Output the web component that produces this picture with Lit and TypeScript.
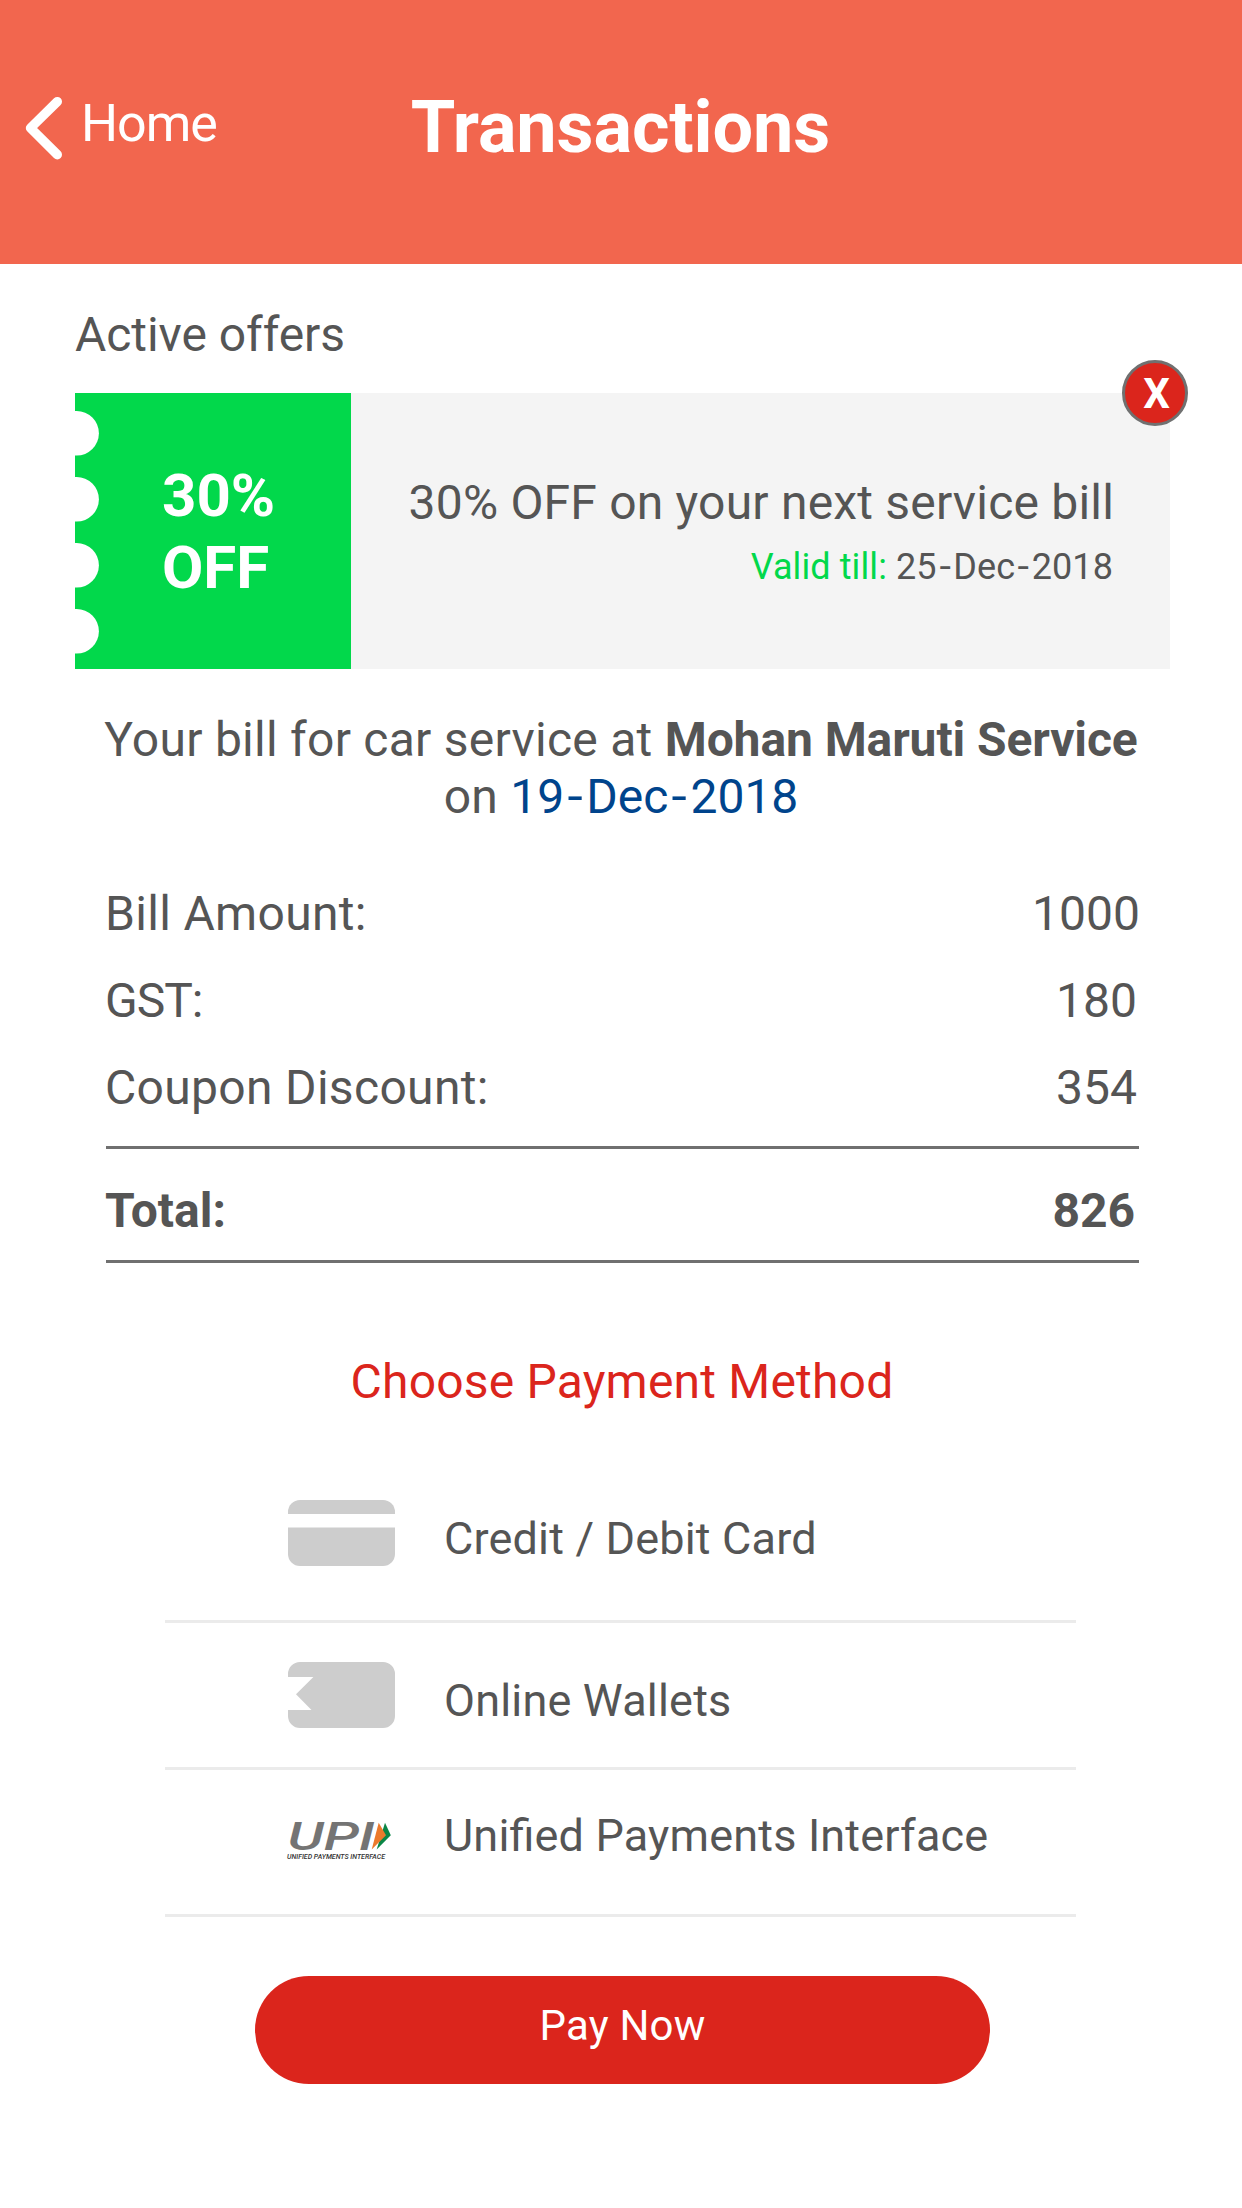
import { LitElement, html, css, svg, TemplateResult } from "lit";
import { customElement, property } from "lit/decorators.js";

const hyphenated = (date: string): TemplateResult =>
  html`${date.split("-").map((part, i) => (i ? html`<span class="dash">-</span>${part}` : part))}`;

const chevron = html`<svg class="chevron" width="42" height="66" viewBox="0 0 42 66">
  <polyline points="37.3,6.6 10.5,33 37.3,59.7" fill="none" stroke="#fff" stroke-width="9.4"
    stroke-linecap="round" stroke-linejoin="round" />
</svg>`;

const cardIcon = html`<svg width="107" height="66" viewBox="0 0 107 66" fill="#cdcdcd">
  <path d="M0 14V12A12 12 0 0 1 12 0H95A12 12 0 0 1 107 12V14Z" />
  <path d="M0 27.4H107V54A12 12 0 0 1 95 66H12A12 12 0 0 1 0 54Z" />
</svg>`;

const walletIcon = html`<svg width="107" height="66" viewBox="0 0 107 66" fill="#cdcdcd">
  <path d="M12 0H95A12 12 0 0 1 107 12V54A12 12 0 0 1 95 66H12A12 12 0 0 1 0 54V48H23.5L8 32.2L25.4 15H0V12A12 12 0 0 1 12 0Z" />
</svg>`;

const upiIcon = html`<svg class="upi" width="110" height="58" viewBox="0 -14 110 58">
  <path d="M100 2.7L105.8 15.3L91.7 29.5Z" fill="#0b8646" />
  <path d="M93.7 2.7L101 15.3L86.7 29.5Z" fill="#ec7a2c" />
  <text x="2.5" y="29.8" class="upi-mark" textLength="87" lengthAdjust="spacingAndGlyphs">UPI</text>
  <text x="2" y="38.7" class="upi-caption" textLength="98" lengthAdjust="spacingAndGlyphs">UNIFIED PAYMENTS INTERFACE</text>
</svg>`;

const notches = html`<svg class="notches" width="24" height="276" viewBox="0 0 24 276" fill="#fff">
  ${[40.3, 106.3, 172.3, 238.3].map((y) => svg`<circle cx="1.6" cy=${y} r="22.3" />`)}
</svg>`;

const base = css`
  :host {
    display: block;
    font-family: Roboto, "Liberation Sans", sans-serif;
    color: #555;
  }
  .dash {
    display: inline-block;
    width: 0.46em;
    text-align: center;
    letter-spacing: 0;
    transform: scaleX(1.15);
  }
`;

@customElement("top-bar")
class TopBar extends LitElement {
  static styles = [base, css`
    .bar {
      display: grid;
      grid-template-columns: 1fr auto 1fr;
      align-items: start;
      height: 264px;
      background: #f2664e;
      color: #fff;
    }
    .back { display: flex; padding: 94px 0 0 20px; }
    .chevron { margin: 1px 0 0; }
    .home { margin-left: 19px; font-size: 52px; line-height: 60px; letter-spacing: -1px; }
    .title { margin: 0; padding: 86px 1px 0 0; font-size: 72px; line-height: 84px; font-weight: 700; letter-spacing: -0.1px; }
  `];
  render() {
    return html`<header class="bar">
      <div class="back">${chevron}<span class="home">Home</span></div>
      <h1 class="title">Transactions</h1>
    </header>`;
  }
}

@customElement("offer-card")
class OfferCard extends LitElement {
  static styles = [base, css`
    .card { position: relative; display: flex; width: 1095px; height: 276px; background: #f4f4f4; }
    .ticket {
      position: relative;
      box-sizing: border-box;
      width: 276px;
      padding: 67px 0 0 87px;
      background: #02d84b;
      color: #fff;
      font-size: 60px;
      line-height: 72px;
      font-weight: 700;
    }
    .notches { position: absolute; left: 0; top: 0; }
    .info { flex: 1; padding: 82px 56px 0 0; text-align: right; }
    .headline { font-size: 48px; line-height: 56px; letter-spacing: 0.2px; }
    .valid { margin: 16px 1px 0 0; font-size: 36px; line-height: 40px; letter-spacing: 0.1px; }
    .green { color: #02d84b; letter-spacing: 0.1px; }
    .close {
      position: absolute;
      top: -33px;
      right: -18px;
      box-sizing: border-box;
      width: 66px;
      height: 66px;
      padding: 6px 0 0 3px;
      border: 3px solid #707070;
      border-radius: 50%;
      background: #db251c;
      color: #fff;
      font-size: 42px;
      line-height: 50px;
      font-weight: 700;
      text-align: center;
    }
  `];
  render() {
    return html`<div class="card">
      <div class="ticket">${notches}<div>30%</div><div>OFF</div></div>
      <div class="info">
        <div class="headline">30% OFF on your next service bill</div>
        <div class="valid"><span class="green">Valid till:</span> ${hyphenated("25-Dec-2018")}</div>
      </div>
      <div class="close">X</div>
    </div>`;
  }
}

@customElement("bill-summary")
class BillSummary extends LitElement {
  static styles = [base, css`
    .intro { margin: 0; font-size: 48px; line-height: 57px; text-align: center; letter-spacing: 0.26px; }
    .shop { font-weight: 700; letter-spacing: -0.1px; }
    .date { color: #00448c; letter-spacing: 0; }
    .rows { display: flex; flex-direction: column; gap: 31px; padding: 61px 103px 30px 106px; }
    .row { display: flex; justify-content: space-between; font-size: 48px; line-height: 56px; }
    .label { margin-left: -1px; letter-spacing: 0.32px; }
    .label.caps { letter-spacing: -1px; }
    .value { margin-right: 2px; }
    .value.wide { margin-right: -1px; }
    .total {
      margin: 0 103px 0 106px;
      padding: 34px 0 21px;
      border-top: 3px solid #707070;
      border-bottom: 3px solid #707070;
      font-weight: 700;
    }
    .total .label { letter-spacing: 0; }
    .total .value { margin-right: 4px; }
  `];
  @property({ attribute: false }) rows: [string, string][] = [];
  render() {
    return html`<p class="intro">Your bill for car service at <span class="shop">Mohan Maruti Service</span><br />on <span class="date">${hyphenated("19-Dec-2018")}</span></p>
      <div class="rows">
        ${this.rows.map(([label, value]) => html`<div class="row">
          <span class="label ${label === "GST:" ? "caps" : ""}">${label}</span>
          <span class="value ${value.length > 3 ? "wide" : ""}">${value}</span>
        </div>`)}
      </div>
      <div class="row total"><span class="label">Total:</span><span class="value">826</span></div>`;
  }
}

@customElement("payment-methods")
class PaymentMethods extends LitElement {
  static styles = [base, css`
    .heading {
      margin: 0;
      padding: 91px 0 0 2px;
      color: #db251c;
      font-size: 48px;
      line-height: 55px;
      font-weight: 400;
      letter-spacing: 0.2px;
      text-align: center;
    }
    .list { margin: 0; padding: 0; width: 911px; margin-left: 165px; list-style: none; }
    .item {
      display: flex;
      box-sizing: border-box;
      height: 147px;
      padding: 39px 0 0 123px;
      border-bottom: 3px solid #ebebeb;
    }
    .item.first { height: 214px; padding-top: 91px; }
    .item.last { padding-top: 27px; }
    .icon { width: 156px; }
    .icon svg { display: block; }
    .icon .upi { margin: 9px 0 0 -3px; }
    .name { padding-top: 13px; font-size: 45px; line-height: 52px; letter-spacing: 0.18px; }
    .joined { letter-spacing: 0; }
    .upi-mark { font: italic 500 39px Roboto, sans-serif; fill: #747474; }
    .upi-caption { font: italic 500 7.4px Roboto, sans-serif; fill: #333; }
  `];
  render() {
    return html`<h2 class="heading">Choose Payment Method</h2>
      <ul class="list">
        <li class="item first"><div class="icon">${cardIcon}</div><span class="name">Credit / Debit Card</span></li>
        <li class="item"><div class="icon">${walletIcon}</div><span class="name">Online Wallets</span></li>
        <li class="item last"><div class="icon">${upiIcon}</div><span class="name">Uni<span class="joined">fi</span>ed Payments Interface</span></li>
      </ul>`;
  }
}

@customElement("app-root")
class AppRoot extends LitElement {
  static styles = [base, css`
    :host { height: 2208px; background: #fff; overflow: hidden; }
    .offers { padding: 43px 72px 42px 75px; }
    .offers-title { margin: 0 0 30px; font-size: 48px; line-height: 56px; font-weight: 400; letter-spacing: -0.06px; }
    .pay {
      display: block;
      box-sizing: border-box;
      width: 735px;
      height: 108px;
      margin: 59px 0 0 255px;
      padding: 25px 0 0;
      border-radius: 54px;
      background: #db251c;
      color: #fff;
      font-size: 42px;
      line-height: 50px;
      letter-spacing: 0.2px;
      text-align: center;
    }
  `];
  private rows: [string, string][] = [
    ["Bill Amount:", "1000"],
    ["GST:", "180"],
    ["Coupon Discount:", "354"],
  ];
  render() {
    return html`<top-bar></top-bar>
      <section class="offers">
        <h2 class="offers-title">Active offers</h2>
        <offer-card></offer-card>
      </section>
      <bill-summary .rows=${this.rows}></bill-summary>
      <payment-methods></payment-methods>
      <div class="pay" role="button">Pay Now</div>`;
  }
}
